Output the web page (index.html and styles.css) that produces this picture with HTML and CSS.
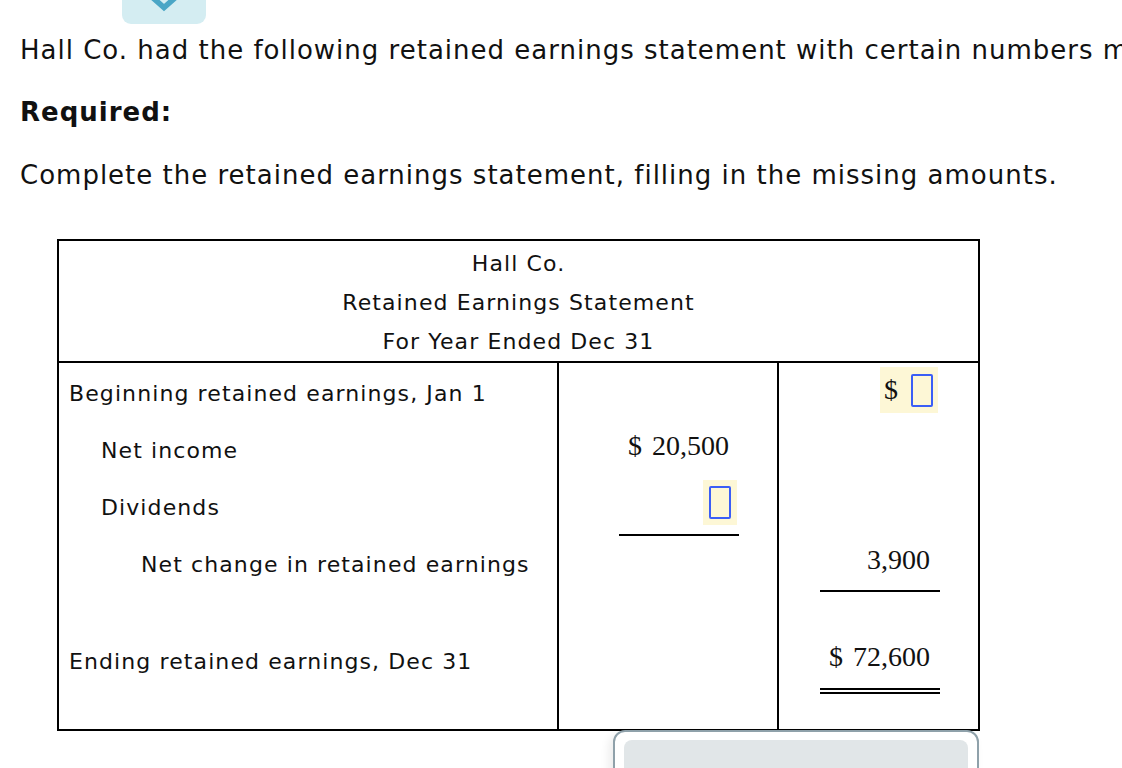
FILE: index.html
```html
<!DOCTYPE html>
<html>
<head>
<meta charset="utf-8">
<link rel="stylesheet" href="styles.css">
</head>
<body>
<div class="page">
  <div class="toggle"><svg width="40" height="20" viewBox="0 0 40 20"><path d="M8 0 L20 10.5 L32 0" fill="none" stroke="#4aa6c6" stroke-width="5.5" stroke-linejoin="miter"/></svg></div>
  <p class="intro">Hall Co. had the following retained earnings statement with certain numbers missing for the year.</p>
  <p class="required">Required:</p>
  <p class="task">Complete the retained earnings statement, filling in the missing amounts.</p>

  <table class="stmt">
    <tr>
      <td class="head" colspan="3">
        <div>Hall Co.</div>
        <div>Retained Earnings Statement</div>
        <div>For Year Ended Dec 31</div>
      </td>
    </tr>
    <tr>
      <td class="label">
        <div class="row">Beginning retained earnings, Jan 1</div>
        <div class="row ind1">Net income</div>
        <div class="row ind1">Dividends</div>
        <div class="row ind2">Net change in retained earnings</div>
        <div class="row tall">Ending retained earnings, Dec 31</div>
      </td>
      <td class="amt mid">
        <div class="row"></div>
        <div class="row num"><span class="val">$ 20,500</span></div>
        <div class="row num"><span class="slot under"><span class="inp"><span class="box"></span></span></span></div>
        <div class="row"></div>
        <div class="row tall"></div>
      </td>
      <td class="amt last">
        <div class="row num"><span class="inp wide"><span class="cur">$</span><span class="box"></span></span></div>
        <div class="row"></div>
        <div class="row"></div>
        <div class="row num"><span class="val under">3,900</span></div>
        <div class="row tall num"><span class="val dbl">$ 72,600</span></div>
      </td>
    </tr>
  </table>

  <div class="panel"><div class="panel-inner"></div></div>
</div>
</body>
</html>
```

FILE: styles.css
```css
html, body {
  margin: 0;
  padding: 0;
  background: #fff;
  overflow: hidden;
}
body {
  width: 1122px;
  height: 768px;
  font-family: "DejaVu Sans", Verdana, sans-serif;
  color: #111;
}
.page {
  position: relative;
  padding-left: 20px;
}
.toggle {
  margin-left: 102px;
  width: 84px;
  height: 27px;
  margin-top: -3px;
  background: #d4edf2;
  border-radius: 0 0 9px 9px;
  display: flex;
  justify-content: center;
  align-items: flex-start;
}
.toggle svg { display: block; }
p { margin: 0; white-space: nowrap; }
.intro, .required, .task {
  font-size: 26px;
  line-height: 30px;
  letter-spacing: 1px;
}
.intro { margin-top: 11px; }
.required {
  font-weight: bold;
  margin-top: 32px;
}
.task { margin-top: 33px; }
.stmt {
  margin-top: 49px;
  margin-left: 37px;
  border-collapse: collapse;
  border: 2px solid #000;
  font-size: 22px;
  letter-spacing: 1.1px;
}
.stmt td {
  border: 2px solid #000;
  padding: 0;
  vertical-align: top;
}
.head {
  text-align: center;
  height: 118px;
  padding-top: 3px !important;
  box-sizing: border-box;
}
.head div { line-height: 39px; }
.label, .amt { padding-top: 2px !important; }
.label { width: 498px; }
.mid { width: 218px; }
.last { width: 199px; }
.row {
  height: 57px;
  line-height: 57px;
  padding-left: 10px;
  white-space: nowrap;
}
.ind1 { padding-left: 42px; }
.ind2 { padding-left: 82px; }
.row.tall {
  height: 136px;
  line-height: 57px;
  padding-top: 40px;
  box-sizing: border-box;
}
.num {
  font-family: "Liberation Serif", "Times New Roman", serif;
  font-size: 28px;
  letter-spacing: 0;
  word-spacing: 3px;
  display: flex;
  justify-content: flex-end;
  align-items: flex-start;
  padding: 0 38px 0 0;
}
.row.tall.num { padding-top: 0; }
.val {
  display: block;
  width: 120px;
  text-align: right;
  line-height: 36px;
  margin-top: 6px;
  padding-right: 10px;
  box-sizing: border-box;
}
.val.under {
  padding-bottom: 12px;
  border-bottom: 2px solid #000;
}
.val.dbl {
  margin-top: 46px;
  padding-bottom: 13px;
  border-bottom: 6px double #000;
}
.slot {
  display: flex;
  justify-content: flex-end;
  width: 120px;
  margin-top: 1px;
  padding: 0 2px 9px 0;
  box-sizing: border-box;
  border-bottom: 2px solid #000;
}
.inp {
  display: flex;
  align-items: center;
  justify-content: center;
  background: #fdf7d6;
  width: 34px;
  height: 45px;
  box-sizing: border-box;
}
.inp.wide {
  width: 58px;
  height: 46px;
  margin-top: 2px;
  margin-right: 2px;
  justify-content: flex-end;
  padding-right: 5px;
}
.cur {
  line-height: 28px;
  margin-right: 13px;
}
.box {
  display: block;
  width: 22px;
  height: 33px;
  border: 2px solid #3b5ef6;
  border-radius: 2px;
  box-sizing: border-box;
}
.panel {
  position: absolute;
  left: 613px;
  top: 733px;
  width: 366px;
  height: 60px;
  border: 2px solid #8fa1aa;
  border-radius: 12px;
  background: #fff;
  box-sizing: border-box;
  padding: 8px 9px;
  box-shadow: -4px 4px 10px rgba(0, 0, 0, 0.08);
}
.panel-inner {
  background: #e1e6e8;
  border-radius: 8px;
  height: 60px;
}
```
